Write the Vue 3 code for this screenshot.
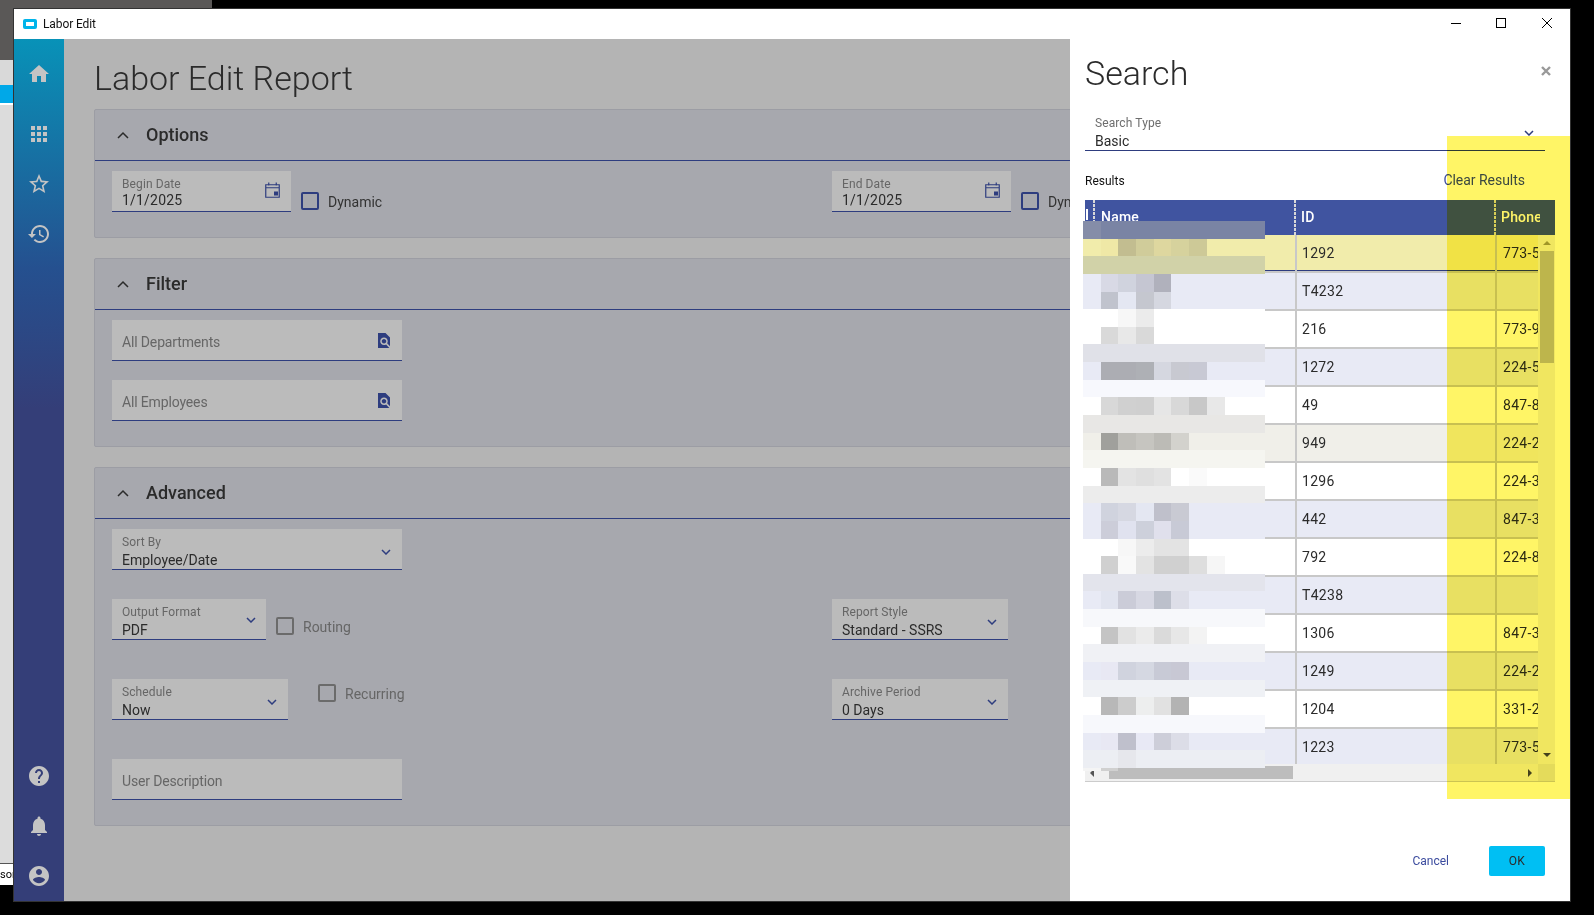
<script setup>
const results = [
  { id: '1292', phone: '773-5', tone: 'selected' },
  { id: 'T4232', phone: '', tone: 'even' },
  { id: '216', phone: '773-9', tone: '' },
  { id: '1272', phone: '224-5', tone: 'even' },
  { id: '49', phone: '847-8', tone: '' },
  { id: '949', phone: '224-2', tone: 'warm' },
  { id: '1296', phone: '224-3', tone: '' },
  { id: '442', phone: '847-3', tone: 'even' },
  { id: '792', phone: '224-8', tone: '' },
  { id: 'T4238', phone: '', tone: 'even' },
  { id: '1306', phone: '847-3', tone: '' },
  { id: '1249', phone: '224-2', tone: 'even' },
  { id: '1204', phone: '331-2', tone: '' },
  { id: '1223', phone: '773-5', tone: 'even' }
]

// Each row of the censoring mosaic: base colour, then colours of the blocks from the left.
const mosaic = [
  ['#7a84a4', '#858da8'],
  ['#f1ecab', '', '#efe8a6', '#c2bd90', '#d0cc9a', '#ded79f', '#d6d29d', '#cdc997'],
  ['#d1d2a8'],
  ['#e8eaf5', '', '#d8d9e5', '#d0d3de', '#c5c6d2', '#b0b1bc'],
  ['#e8eaf5', '', '#c0c3cd', '#e4e7f2', '#c5c7cf', '#d5d7e0'],
  ['#ffffff', '', '', '#f7f7f7', '#ebebeb'],
  ['#ffffff', '', '#d9d9d9', '#e8e8e8', '#d9d9d9'],
  ['#e0e1e8'],
  ['#e8eaf5', '', '#acadb3', '#acadb3', '#aeb0b5', '#d5d7e0', '#c8c9d1', '#c8c9d4'],
  ['#f7f8fd'],
  ['#ffffff', '', '#d8d8d8', '#d0d0d0', '#cfcfcf', '#e6e6e6', '#d8d8d8', '#c8c8c8', '#e8e8e8'],
  ['#e8e7e5'],
  ['#f0efe9', '', '#a0a09c', '#bfbeb9', '#c6c5c0', '#bcbbb6', '#d3d2cd'],
  ['#f5f5f0'],
  ['#ffffff', '', '#b9b9b9', '#e3e3e3', '#dfdfdf', '#e3e3e3', '', '#fafafa'],
  ['#ececec'],
  ['#e8eaf5', '', '#d0d3de', '#d6d8e2', '#e4e7f2', '#bfc0cb', '#c9cad3'],
  ['#e8eaf5', '', '#cccdd9', '#e0e2ef', '#cdd0db', '#e0e0ec', '#c8cad6'],
  ['#ffffff', '', '', '#f7f7f7', '#ececec', '#e3e3e3', '#e3e3e3'],
  ['#ffffff', '', '#d0d0d0', '#f9f9f9', '#e3e3e3', '#d0d0d0', '#d0d0d0', '#dedede', '#f6f6f6'],
  ['#e3e4ec'],
  ['#e8eaf5', '', '#e1e4ef', '#cbccd8', '#d7d8e3', '#bcc0cb', '#dddee8'],
  ['#f7f8fb'],
  ['#ffffff', '', '#c4c4c4', '#e2e2e2', '#ebebeb', '#dadada', '#e7e7e7', '#f3f3f3'],
  ['#f0f1f5'],
  ['#e8eaf5', '', '#e8e8f3', '#d0d3de', '#d5d8e2', '#c8cad6', '#c8c8d4'],
  ['#eff1f5'],
  ['#ffffff', '', '#b8b8b8', '#cccccc', '#edeeee', '#e1e1e1', '#b3b3b3'],
  ['#f7f8fc'],
  ['#e8eaf5', '', '#e8e8f3', '#bfc0cc', '#e8e9f5', '#cdced9', '#dcdde7'],
  ['#eceef3', '', '', '#e6e7ec']
]
</script>

<template>
  <div class="desktop">
    <div class="left-strip">
      <div class="ls-dark"></div>
      <div class="ls-light"></div>
      <div class="ls-blue"></div>
      <div class="ls-rest"></div>
      <div class="ls-text">sor</div>
    </div>

    <div class="stage">
      <div class="top-strip"><div class="top-dark"></div></div>

      <div class="window">
        <div class="titlebar">
          <span class="app-icon"><span></span></span>
          <span class="app-title">Labor Edit</span>
          <div class="win-controls">
            <svg class="win-min" width="12" height="12" viewBox="0 0 12 12"><path d="M1 6.5h10" stroke="#000" stroke-width="1" fill="none" /></svg>
            <svg width="12" height="12" viewBox="0 0 12 12"><rect x="1.5" y="1.5" width="9" height="9" stroke="#000" stroke-width="1" fill="none" /></svg>
            <svg width="12" height="12" viewBox="0 0 12 12"><path d="M1 1l10 10M11 1L1 11" stroke="#000" stroke-width="1" fill="none" /></svg>
          </div>
        </div>

        <div class="workspace">
          <nav class="sidebar">
            <div class="nav-top">
              <svg class="nav-icon" viewBox="0 0 24 24"><path d="M10 20v-6h4v6h5v-8h3L12 3 2 12h3v8z" /></svg>
              <svg class="nav-icon nav-apps" viewBox="0 0 24 24"><path d="M4 8h4V4H4v4zm6 12h4v-4h-4v4zm-6 0h4v-4H4v4zm0-6h4v-4H4v4zm6 0h4v-4h-4v4zm6-10v4h4V4h-4zm-6 4h4V4h-4v4zm6 6h4v-4h-4v4zm0 6h4v-4h-4v4z" /></svg>
              <svg class="nav-icon" viewBox="0 0 24 24"><path d="M22 9.24l-7.19-.62L12 2 9.19 8.63 2 9.24l5.46 4.73L5.82 21 12 17.27 18.18 21l-1.63-7.03L22 9.24zM12 15.4l-3.76 2.27 1-4.28-3.32-2.88 4.38-.38L12 6.1l1.71 4.04 4.38.38-3.32 2.88 1 4.28L12 15.4z" /></svg>
              <svg class="nav-icon" viewBox="0 0 24 24"><path d="M13 3c-4.97 0-9 4.03-9 9H1l3.89 3.89.07.14L9 12H6c0-3.87 3.13-7 7-7s7 3.13 7 7-3.13 7-7 7c-1.93 0-3.68-.79-4.94-2.06l-1.42 1.42C8.27 19.99 10.51 21 13 21c4.97 0 9-4.03 9-9s-4.03-9-9-9zm-1 5v5l4.28 2.54.72-1.21-3.5-2.08V8H12z" /></svg>
            </div>
            <div class="nav-bottom">
              <svg class="nav-icon" viewBox="0 0 24 24"><path d="M12 2C6.48 2 2 6.48 2 12s4.48 10 10 10 10-4.48 10-10S17.52 2 12 2zm1 17h-2v-2h2v2zm2.07-7.75l-.9.92C13.45 12.9 13 13.5 13 15h-2v-.5c0-1.1.45-2.1 1.17-2.83l1.24-1.26c.37-.36.59-.86.59-1.41 0-1.1-.9-2-2-2s-2 .9-2 2H8c0-2.21 1.79-4 4-4s4 1.79 4 4c0 .88-.36 1.68-.93 2.25z" /></svg>
              <svg class="nav-icon" viewBox="0 0 24 24"><path d="M12 22c1.1 0 2-.9 2-2h-4c0 1.1.89 2 2 2zm6-6v-5c0-3.07-1.64-5.64-4.5-6.32V4c0-.83-.67-1.5-1.5-1.5s-1.5.67-1.5 1.5v.68C7.63 5.36 6 7.92 6 11v5l-2 2v1h16v-1l-2-2z" /></svg>
              <svg class="nav-icon" viewBox="0 0 24 24"><path d="M12 2C6.48 2 2 6.48 2 12s4.48 10 10 10 10-4.48 10-10S17.52 2 12 2zm0 3c1.66 0 3 1.34 3 3s-1.34 3-3 3-3-1.34-3-3 1.34-3 3-3zm0 14.2c-2.5 0-4.71-1.28-6-3.22.03-1.99 4-3.08 6-3.08 1.99 0 5.97 1.09 6 3.08-1.29 1.94-3.5 3.22-6 3.22z" /></svg>
            </div>
          </nav>

          <main class="report">
            <h1 class="page-title">Labor Edit Report</h1>

            <section class="panel">
              <header class="panel-head">
                <svg class="collapse" width="12" height="8" viewBox="0 0 12 8"><path d="M1 7l5-5 5 5" /></svg>
                <h2>Options</h2>
              </header>
              <div class="panel-body two-col">
                <div class="line">
                  <div class="field w-date">
                    <div class="stack"><span class="label">Begin Date</span><span class="value spaced">1/1/2025</span></div>
                    <svg class="cal" width="15" height="16" viewBox="0 0 15 16"><path d="M.75 2.75h13.5v12.5H.75zM.75 5.75h13.5M3.75.5v3M11.25.5v3" /><rect x="9" y="9.5" width="4" height="4" /></svg>
                  </div>
                  <span class="check blue top-21"></span><span class="check-label top-21">Dynamic</span>
                </div>
                <div class="line">
                  <div class="field w-date">
                    <div class="stack"><span class="label">End Date</span><span class="value spaced">1/1/2025</span></div>
                    <svg class="cal" width="15" height="16" viewBox="0 0 15 16"><path d="M.75 2.75h13.5v12.5H.75zM.75 5.75h13.5M3.75.5v3M11.25.5v3" /><rect x="9" y="9.5" width="4" height="4" /></svg>
                  </div>
                  <span class="check blue top-21"></span><span class="check-label top-21">Dynamic</span>
                </div>
              </div>
            </section>

            <section class="panel">
              <header class="panel-head">
                <svg class="collapse" width="12" height="8" viewBox="0 0 12 8"><path d="M1 7l5-5 5 5" /></svg>
                <h2>Filter</h2>
              </header>
              <div class="panel-body rows-19">
                <div class="field w-wide">
                  <span class="placeholder">All Departments</span>
                  <svg class="find" width="12" height="15" viewBox="4 2 16 20"><path d="M20 19.59V8l-6-6H4v20h15.19l-4.43-4.83c-.8.52-1.74.83-2.76.83-2.76 0-5-2.24-5-5s2.24-5 5-5 5 2.24 5 5c0 1.02-.31 1.96-.83 2.75L20 19.59zM9 13c0 1.66 1.34 3 3 3s3-1.34 3-3-1.34-3-3-3-3 1.34-3 3z" /></svg>
                </div>
                <div class="field w-wide">
                  <span class="placeholder">All Employees</span>
                  <svg class="find" width="12" height="15" viewBox="4 2 16 20"><path d="M20 19.59V8l-6-6H4v20h15.19l-4.43-4.83c-.8.52-1.74.83-2.76.83-2.76 0-5-2.24-5-5s2.24-5 5-5 5 2.24 5 5c0 1.02-.31 1.96-.83 2.75L20 19.59zM9 13c0 1.66 1.34 3 3 3s3-1.34 3-3-1.34-3-3-3-3 1.34-3 3z" /></svg>
                </div>
              </div>
            </section>

            <section class="panel">
              <header class="panel-head">
                <svg class="collapse" width="12" height="8" viewBox="0 0 12 8"><path d="M1 7l5-5 5 5" /></svg>
                <h2>Advanced</h2>
              </header>
              <div class="panel-body">
                <div class="field w-wide">
                  <div class="stack"><span class="label">Sort By</span><span class="value">Employee/Date</span></div>
                  <svg class="chev" width="10" height="6" viewBox="0 0 10 6"><path d="M1 1l4 4 4-4" /></svg>
                </div>
                <div class="two-col gap-29">
                  <div class="line">
                    <div class="field w-format">
                      <div class="stack"><span class="label">Output Format</span><span class="value">PDF</span></div>
                      <svg class="chev" width="10" height="6" viewBox="0 0 10 6"><path d="M1 1l4 4 4-4" /></svg>
                    </div>
                    <span class="check grey top-18"></span><span class="check-label off top-18">Routing</span>
                  </div>
                  <div class="line">
                    <div class="field w-select">
                      <div class="stack"><span class="label">Report Style</span><span class="value">Standard - SSRS</span></div>
                      <svg class="chev" width="10" height="6" viewBox="0 0 10 6"><path d="M1 1l4 4 4-4" /></svg>
                    </div>
                  </div>
                </div>
                <div class="two-col gap-39">
                  <div class="line">
                    <div class="field w-select">
                      <div class="stack"><span class="label">Schedule</span><span class="value">Now</span></div>
                      <svg class="chev" width="10" height="6" viewBox="0 0 10 6"><path d="M1 1l4 4 4-4" /></svg>
                    </div>
                    <span class="check grey far top-5"></span><span class="check-label off top-5">Recurring</span>
                  </div>
                  <div class="line">
                    <div class="field w-select">
                      <div class="stack"><span class="label">Archive Period</span><span class="value">0 Days</span></div>
                      <svg class="chev" width="10" height="6" viewBox="0 0 10 6"><path d="M1 1l4 4 4-4" /></svg>
                    </div>
                  </div>
                </div>
                <div class="field w-wide gap-39">
                  <span class="placeholder">User Description</span>
                </div>
              </div>
            </section>
          </main>

          <aside class="dialog">
            <div class="dialog-head">
              <h1 class="dialog-title">Search</h1>
              <svg class="dialog-close" width="10" height="10" viewBox="0 0 10 10"><path d="M1 1l8 8M9 1L1 9" /></svg>
            </div>

            <div class="search-type">
              <div class="stack"><span class="label dark">Search Type</span><span class="value">Basic</span></div>
              <svg class="chev" width="10" height="6" viewBox="0 0 10 6"><path d="M1 1l4 4 4-4" /></svg>
            </div>

            <div class="results-bar">
              <span class="results-label">Results</span>
              <a class="clear">Clear Results</a>
            </div>

            <div class="grid">
              <div class="grid-head">
                <div class="hc hc-sel"><i></i></div>
                <div class="hc hc-name">Name</div>
                <div class="hc hc-id">ID</div>
                <div class="hc hc-phone">Phone</div>
              </div>

              <div class="grid-main">
                <div class="grid-rows">
                  <div v-for="r in results" :key="r.id" class="row" :class="r.tone">
                    <div class="cell c-name"></div>
                    <div class="cell c-id">{{ r.id }}</div>
                    <div class="cell c-phone">{{ r.phone }}</div>
                  </div>
                </div>
                <div class="vscroll">
                  <i class="tri up"></i>
                  <div class="vthumb"></div>
                  <i class="tri down"></i>
                </div>
              </div>

              <div class="hscroll">
                <i class="tri left"></i>
                <div class="hthumb"></div>
                <i class="tri right"></i>
                <div class="corner"></div>
              </div>

              <div class="mosaic">
                <div v-for="(m, i) in mosaic" :key="i" class="m-row" :style="{ background: m[0] }">
                  <span v-for="(c, j) in m.slice(1)" :key="j" class="m-cell" :style="{ background: c || 'transparent' }"></span>
                </div>
                <div class="m-tail"><span class="m-cell tail-a"></span><span class="m-cell tail-b"></span></div>
              </div>
            </div>

            <div class="dialog-actions">
              <a class="cancel">Cancel</a>
              <button class="ok">OK</button>
            </div>
          </aside>
        </div>
      </div>
    </div>

    <div class="highlighter"></div>
  </div>
</template>

<style scoped>
.desktop {
  position: relative;
  display: flex;
  width: 1594px;
  height: 915px;
  overflow: hidden;
  background: #000;
  font-family: Roboto, "Liberation Sans", sans-serif;
  color: #2b2b2b;
}
.left-strip {
  width: 13px;
  height: 885px;
  display: flex;
  flex-direction: column;
  flex: none;
}
.ls-dark { height: 60px; background: #5a5857; }
.ls-light { height: 25px; background: #d9d9d9; }
.ls-blue { height: 18px; background: #00a8e8; border-bottom: 2px solid #fff; box-sizing: content-box; }
.ls-rest { flex: 1; background: #dcdcdc; border-bottom: 1px solid #555; }
.ls-text {
  height: 21px;
  background: #fff;
  font-size: 11px;
  line-height: 21px;
  color: #000;
  overflow: hidden;
  white-space: nowrap;
}
.stage { width: 1558px; flex: none; }
.top-strip { height: 8px; }
.top-dark { width: 199px; height: 8px; background: #5a5857; }
.window {
  width: 1558px;
  height: 894px;
  box-sizing: border-box;
  border: 1px solid #333;
  display: flex;
  flex-direction: column;
  background: #fff;
}
.titlebar {
  height: 30px;
  flex: none;
  display: flex;
  align-items: center;
  background: #fff;
  color: #111;
}
.app-icon {
  margin-left: 9px;
  width: 14px;
  height: 10px;
  border-radius: 2px;
  background: #00b4ea;
  display: flex;
  align-items: center;
  justify-content: center;
}
.app-icon span { width: 8px; height: 4px; background: #fff; }
.app-title { margin-left: 6px; font-size: 12px; letter-spacing: -.1px; }
.win-controls {
  margin-left: auto;
  margin-right: 17px;
  margin-bottom: 2px;
  display: flex;
  gap: 34px;
}
.win-min { margin-left: 1px; margin-right: -1px; }
.workspace { flex: 1; display: flex; min-height: 0; }
.sidebar {
  width: 50px;
  flex: none;
  display: flex;
  flex-direction: column;
  justify-content: space-between;
  align-items: center;
  background: linear-gradient(#0892b8 0, #25508f 230px, #343e78 370px);
}
.nav-top { display: flex; flex-direction: column; gap: 26px; padding-top: 23px; }
.nav-bottom { display: flex; flex-direction: column; gap: 26px; padding-bottom: 13px; }
.nav-icon { width: 24px; height: 24px; fill: #c4c4c4; display: block; }
.nav-apps { margin-top: 10px; }
.report {
  flex: 1;
  min-width: 0;
  overflow: hidden;
  background: #b4b4b4;
  padding-left: 30px;
}
.page-title {
  margin: 19px 0 11px;
  font-size: 34px;
  line-height: 40px;
  font-weight: 300;
  color: #2b2b2b;
  white-space: nowrap;
}
.panel {
  width: 1040px;
  margin-bottom: 20px;
  box-sizing: border-box;
  background: #a7a8ae;
  border: 1px solid #9c9da4;
  border-radius: 2px;
}
.panel-head {
  height: 51px;
  box-sizing: border-box;
  display: flex;
  align-items: center;
  padding-left: 22px;
  border-bottom: 1px solid #2e3d7f;
}
.panel-head h2 {
  margin: 0 0 2px 17px;
  font-size: 18px;
  font-weight: 500;
  color: #2b2b2b;
}
.collapse path { fill: none; stroke: #2b2b2b; stroke-width: 1.5; }
.panel-body { padding: 10px 0 25px 17px; }
.two-col { display: grid; grid-template-columns: 720px 1fr; }
.rows-19 { display: flex; flex-direction: column; gap: 19px; }
.gap-29 { margin-top: 29px; }
.gap-39 { margin-top: 39px; }
.line { display: flex; align-items: flex-start; }
.field {
  height: 41px;
  box-sizing: border-box;
  flex: none;
  display: flex;
  align-items: center;
  justify-content: space-between;
  padding: 0 11px 0 10px;
  background: #bbb;
  border-bottom: 1px solid #2e3d7f;
}
.w-date { width: 179px; }
.w-wide { width: 290px; }
.w-format { width: 154px; }
.w-select { width: 176px; }
.stack { display: flex; flex-direction: column; align-self: flex-start; padding-top: 6px; white-space: nowrap; }
.label { font-size: 12px; line-height: 14px; color: #666; letter-spacing: .1px; }
.label.dark { color: #6e6e6e; }
.value { margin-top: 2px; font-size: 14px; line-height: 18px; color: #2b2b2b; letter-spacing: 0; }
.value.spaced { margin-top: 0; letter-spacing: .2px; }
.placeholder { font-size: 14px; color: #666; padding-top: 3px; letter-spacing: -.15px; }
.cal { margin-bottom: 3px; }
.cal path { fill: none; stroke: #2e3d7f; stroke-width: 1.2; }
.cal rect { fill: #2e3d7f; }
.find { fill: #2e3d7f; margin-right: 1px; }
.chev { margin-top: 5px; }
.w-format .chev { margin-top: 1px; margin-right: -1px; }
.chev path { fill: none; stroke: #2e3d7f; stroke-width: 1.5; }
.check {
  width: 18px;
  height: 18px;
  box-sizing: border-box;
  margin-left: 10px;
  flex: none;
  border-radius: 2px;
}
.check.far { margin-left: 30px; }
.check.blue { border: 2px solid #2e3d7f; }
.check.grey { border: 2px solid #6b6b6b; }
.check-label { margin-left: 9px; font-size: 14px; line-height: 20px; color: #333; letter-spacing: 0; white-space: nowrap; }
.check-label.off { color: #666; }
.top-21 { margin-top: 21px; }
.top-18 { margin-top: 18px; }
.top-5 { margin-top: 5px; }

.dialog {
  width: 500px;
  flex: none;
  box-sizing: border-box;
  padding: 0 14px 0 15px;
  background: #fff;
  display: flex;
  flex-direction: column;
}
.dialog-head {
  display: flex;
  justify-content: space-between;
  align-items: center;
  padding-top: 14px;
  height: 40px;
  box-sizing: content-box;
}
.dialog-title {
  margin: 0;
  font-size: 34px;
  line-height: 40px;
  font-weight: 300;
  color: #2b2b2b;
}
.dialog-close { margin-right: 5px; margin-bottom: 4px; }
.dialog-close path { fill: none; stroke: #999; stroke-width: 2.4; }
.search-type {
  margin-top: 19px;
  width: 460px;
  height: 39px;
  box-sizing: border-box;
  display: flex;
  justify-content: space-between;
  padding: 0 11px 0 10px;
  border-bottom: 1px solid #2e3d7f;
}
.search-type .stack { padding-top: 4px; }
.search-type .chev { margin-top: 18px; }
.results-bar {
  margin-top: 20px;
  height: 18px;
  display: flex;
  justify-content: space-between;
  align-items: center;
  font-size: 12px;
  color: #111;
  padding-right: 31px;
}
.results-label { padding-top: 2px; }
.clear { font-size: 14px; color: #3b4b9e; letter-spacing: -.03px; }
.grid {
  position: relative;
  margin-top: 11px;
  width: 470px;
}
.grid-head {
  height: 35px;
  display: flex;
  background: #4054a0;
  color: #fff;
  font-size: 14px;
  font-weight: 500;
  line-height: 35px;
  letter-spacing: .2px;
}
.hc {
  box-sizing: border-box;
  padding-left: 6px;
  white-space: nowrap;
  overflow: hidden;
  background: repeating-linear-gradient(#d8d8d8 0 3px, transparent 3px 4px) right top / 2px 100% no-repeat;
}
.hc-sel { width: 10px; padding-left: 0; }
.hc-sel i { display: block; width: 2px; height: 11px; margin: 9px 0 0 1px; background: #fff; }
.hc-name { width: 201px; }
.hc-id { width: 200px; padding-left: 5px; }
.hc-phone { width: 44px; padding-left: 5px; background: none; }
.grid-main { display: flex; height: 529px; }
.grid-rows { width: 453px; flex: none; overflow: hidden; }
.row {
  height: 38px;
  box-sizing: border-box;
  display: grid;
  grid-template-columns: 212px 200px 41px;
  border-bottom: 2px solid #c8c8c8;
  background: #fff;
  font-size: 14px;
  line-height: 37px;
  color: #2b2b2b;
  letter-spacing: .3px;
}
.row.even { background: #e8eaf5; }
.row.warm { background: #f0efe9; }
.row.selected { background: #f1ecab; box-shadow: inset 0 -1px 0 #2e3d7f; }
.cell { box-sizing: border-box; overflow: hidden; white-space: nowrap; }
.c-name, .c-id { border-right: 2px solid #c8c8c8; }
.c-id { padding-left: 5px; }
.c-phone { padding-left: 6px; }
.vscroll {
  width: 17px;
  flex: none;
  background: #f0f0f0;
  display: flex;
  flex-direction: column;
  align-items: center;
  padding: 6px 0 7px;
  box-sizing: border-box;
}
.vthumb { width: 14px; height: 112px; margin-top: 6px; background: #bdbdbd; }
.tri { display: block; width: 0; height: 0; flex: none; }
.tri.up { border: 4px solid transparent; border-top: 0; border-bottom: 4px solid #a09c60; }
.tri.down { margin-top: auto; border: 4px solid transparent; border-bottom: 0; border-top: 4px solid #444; }
.tri.left { margin-left: 5px; margin-right: 1px; border: 4px solid transparent; border-left: 0; border-right: 4px solid #555; }
.tri.right { margin-left: auto; margin-right: 6px; border: 4px solid transparent; border-right: 0; border-left: 4px solid #444; }
.hscroll {
  height: 18px;
  box-sizing: border-box;
  display: flex;
  align-items: center;
  background: #f0f0f0;
  border-bottom: 1px solid #ccc;
}
.hthumb { width: 184px; height: 13px; margin-left: 14px; background: #bdbdbd; }
.corner { width: 17px; height: 17px; background: #e4e4e4; }
.mosaic {
  position: absolute;
  left: -2px;
  top: 21px;
  width: 182px;
  display: flex;
  flex-direction: column;
}
.m-row { height: 17.645px; display: flex; }
.m-tail { height: 3px; display: flex; }
.m-cell { width: 17.7px; flex: none; }
.tail-a { background: #f4f4f4; }
.tail-b { background: #d0d0d0; }
.dialog-actions {
  margin-top: 64px;
  width: 460px;
  display: flex;
  justify-content: flex-end;
  align-items: center;
}
.cancel { font-size: 12px; color: #3b4b9e; letter-spacing: 0; margin-right: 40px; }
.ok {
  width: 56px;
  height: 30px;
  border: 0;
  border-radius: 2px;
  background: #00bff3;
  color: #2b2b2b;
  font-family: inherit;
  font-size: 12px;
  letter-spacing: .3px;
}
.highlighter {
  position: absolute;
  left: 1447px;
  top: 136px;
  width: 123px;
  height: 663px;
  background: #fff566;
  mix-blend-mode: multiply;
  pointer-events: none;
}
</style>
